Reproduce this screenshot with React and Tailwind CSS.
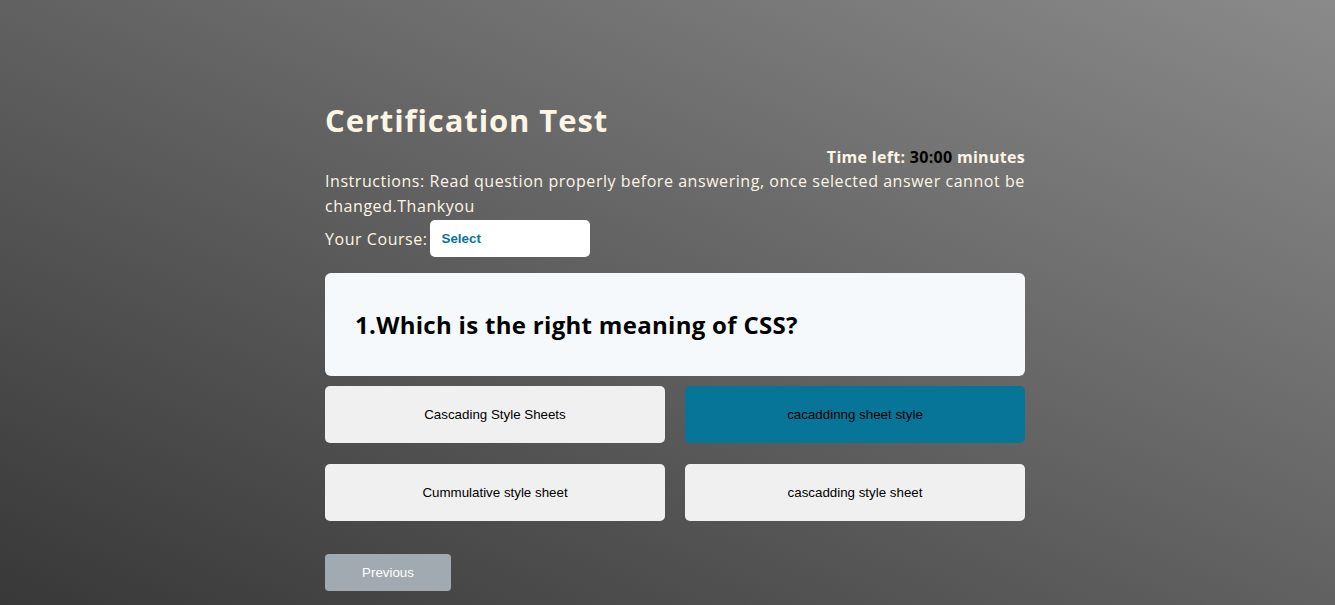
export default function App() {
  const opts = [
    { t: "Cascading Style Sheets", sel: false },
    { t: "cacaddinng sheet style", sel: true },
    { t: "Cummulative style sheet", sel: false },
    { t: "cascadding style sheet", sel: false },
  ];
  return (
    <div className="w-full min-h-[605px] bg-[linear-gradient(to_top_right,#383838,#8a8a8a)] flex justify-center pl-[15px]">
      <div className="w-[700px] pt-[98px] font-['Open_Sans',sans-serif] text-[#fdf5e6]">
        <h1 className="text-[31px] font-bold leading-[44px] tracking-[0.9px]">Certification Test</h1>
        <div className="text-right text-[16px] font-bold leading-[24px] mt-[3px] tracking-[0.3px]">
          Time left: <span className="text-black">30:00</span> minutes
        </div>
        <p className="text-[16px] leading-[25px] tracking-[0.55px] whitespace-nowrap">
          Instructions: Read question properly before answering, once selected answer cannot be
          <br />
          changed.Thankyou
        </p>
        <div className="flex items-center mt-[1px] text-[16px] tracking-[0.55px]">
          <span>Your Course:</span>
          <div className="ml-[2px] w-[160px] h-[37px] bg-white rounded-[5px] flex items-center px-[12px] font-['Liberation_Sans',sans-serif] text-[13.33px] font-bold text-[#0b7497] tracking-normal">
            Select
          </div>
        </div>
        <div className="mt-[16px] h-[103px] bg-[#f5f9fc] rounded-[6px] flex items-center px-[30px]">
          <h2 className="text-black text-[24px] font-bold tracking-[0.3px]">1.Which is the right meaning of CSS?</h2>
        </div>
        <div className="mt-[10px] grid grid-cols-2 gap-x-[20px] gap-y-[21px] font-['Liberation_Sans',sans-serif]">
          {opts.map((o) => (
            <div
              key={o.t}
              className={
                o.sel
                  ? "h-[57px] rounded-[5px] bg-[#067598] flex items-center justify-center text-[13.33px] text-black"
                  : "h-[57px] rounded-[5px] bg-[#f0f0f0] flex items-center justify-center text-[13.33px] text-black"
              }
            >
              {o.t}
            </div>
          ))}
        </div>
        <div className="mt-[33px] w-[126px] h-[37px] bg-[#a1aab1] rounded-[4px] flex items-center justify-center font-['Liberation_Sans',sans-serif] text-[13.33px] text-white">
          Previous
        </div>
      </div>
    </div>
  );
}
